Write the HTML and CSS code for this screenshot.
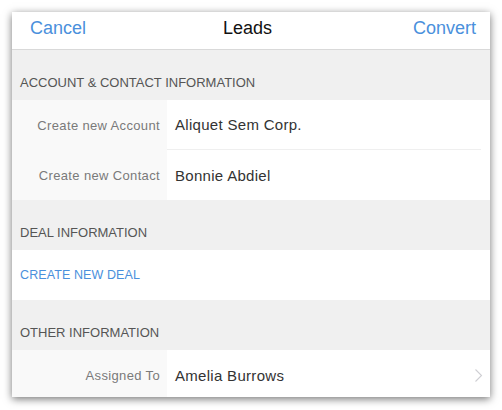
FILE: index.html
```html
<!DOCTYPE html>
<html>
	<head>
		<meta charset="UTF-8">
		<title>Leads</title>
		<link rel="stylesheet" href="styles.css">
	</head>
	<body>
		<div id="panel">
			<div class="bar">
				<span class="btn">Cancel</span>
				<span class="title">Leads</span>
				<span class="btn">Convert</span>
			</div>

			<div class="group">ACCOUNT &amp; CONTACT INFORMATION</div>
			<div class="row">
				<span class="label">Create new Account</span>
				<span class="value line">Aliquet Sem Corp.</span>
			</div>
			<div class="row">
				<span class="label">Create new Contact</span>
				<span class="value">Bonnie Abdiel</span>
			</div>

			<div class="group">DEAL INFORMATION</div>
			<div class="row link">CREATE NEW DEAL</div>

			<div class="group">OTHER INFORMATION</div>
			<div class="row">
				<span class="label">Assigned To</span>
				<span class="value">Amelia Burrows
					<svg class="arrow" width="9" height="15" viewBox="0 0 9 15"><polyline points="1.5,1.5 7.5,7.5 1.5,13.5" fill="none" stroke="#cfcfd3" stroke-width="1.1"/></svg>
				</span>
			</div>
		</div>
	</body>
</html>
```

FILE: styles.css
```css
body {
	margin: 0;
	padding: 12px;
	font-family: "Liberation Sans", Arial, sans-serif;
	background: #fff;
}

#panel {
	width: 478px;
	height: 385px;
	overflow: hidden;
	background: #f0f0f0;
	box-shadow: 0 2px 8px rgba(0, 0, 0, 0.55);
}

.bar {
	height: 37px;
	box-sizing: border-box;
	display: flex;
	align-items: center;
	justify-content: space-between;
	padding: 0 14px 4px 18px;
	background: #fff;
	border-bottom: 1px solid #d9d9d9;
	height: 38px;
}

.bar .btn {
	font-size: 18px;
	color: #4a90dc;
}

.bar .title {
	font-size: 18px;
	color: #111;
	margin-left: -4px;
}

.group {
	height: 50px;
	box-sizing: border-box;
	display: flex;
	align-items: flex-end;
	padding: 0 0 10px 8px;
	font-size: 13px;
	line-height: 14px;
	color: #555;
}

.row {
	height: 50px;
	display: flex;
	background: #fff;
}

.row .label {
	width: 148px;
	padding-right: 7px;
	background: #f9f9f9;
	display: flex;
	align-items: center;
	justify-content: flex-end;
	font-size: 13px;
	letter-spacing: 0.35px;
	color: #7a7a7a;
}

.row .value {
	flex: 1;
	margin-right: 9px;
	padding-left: 8px;
	display: flex;
	align-items: center;
	justify-content: space-between;
	font-size: 15px;
	letter-spacing: 0.3px;
	color: #333;
}

.row .value.line {
	border-bottom: 1px solid #efefef;
}

.row .value .arrow {
	margin-right: -2px;
}

.row.link {
	align-items: center;
	padding-left: 8px;
	font-size: 12.5px;
	letter-spacing: 0.1px;
	color: #4a90dc;
}
```
